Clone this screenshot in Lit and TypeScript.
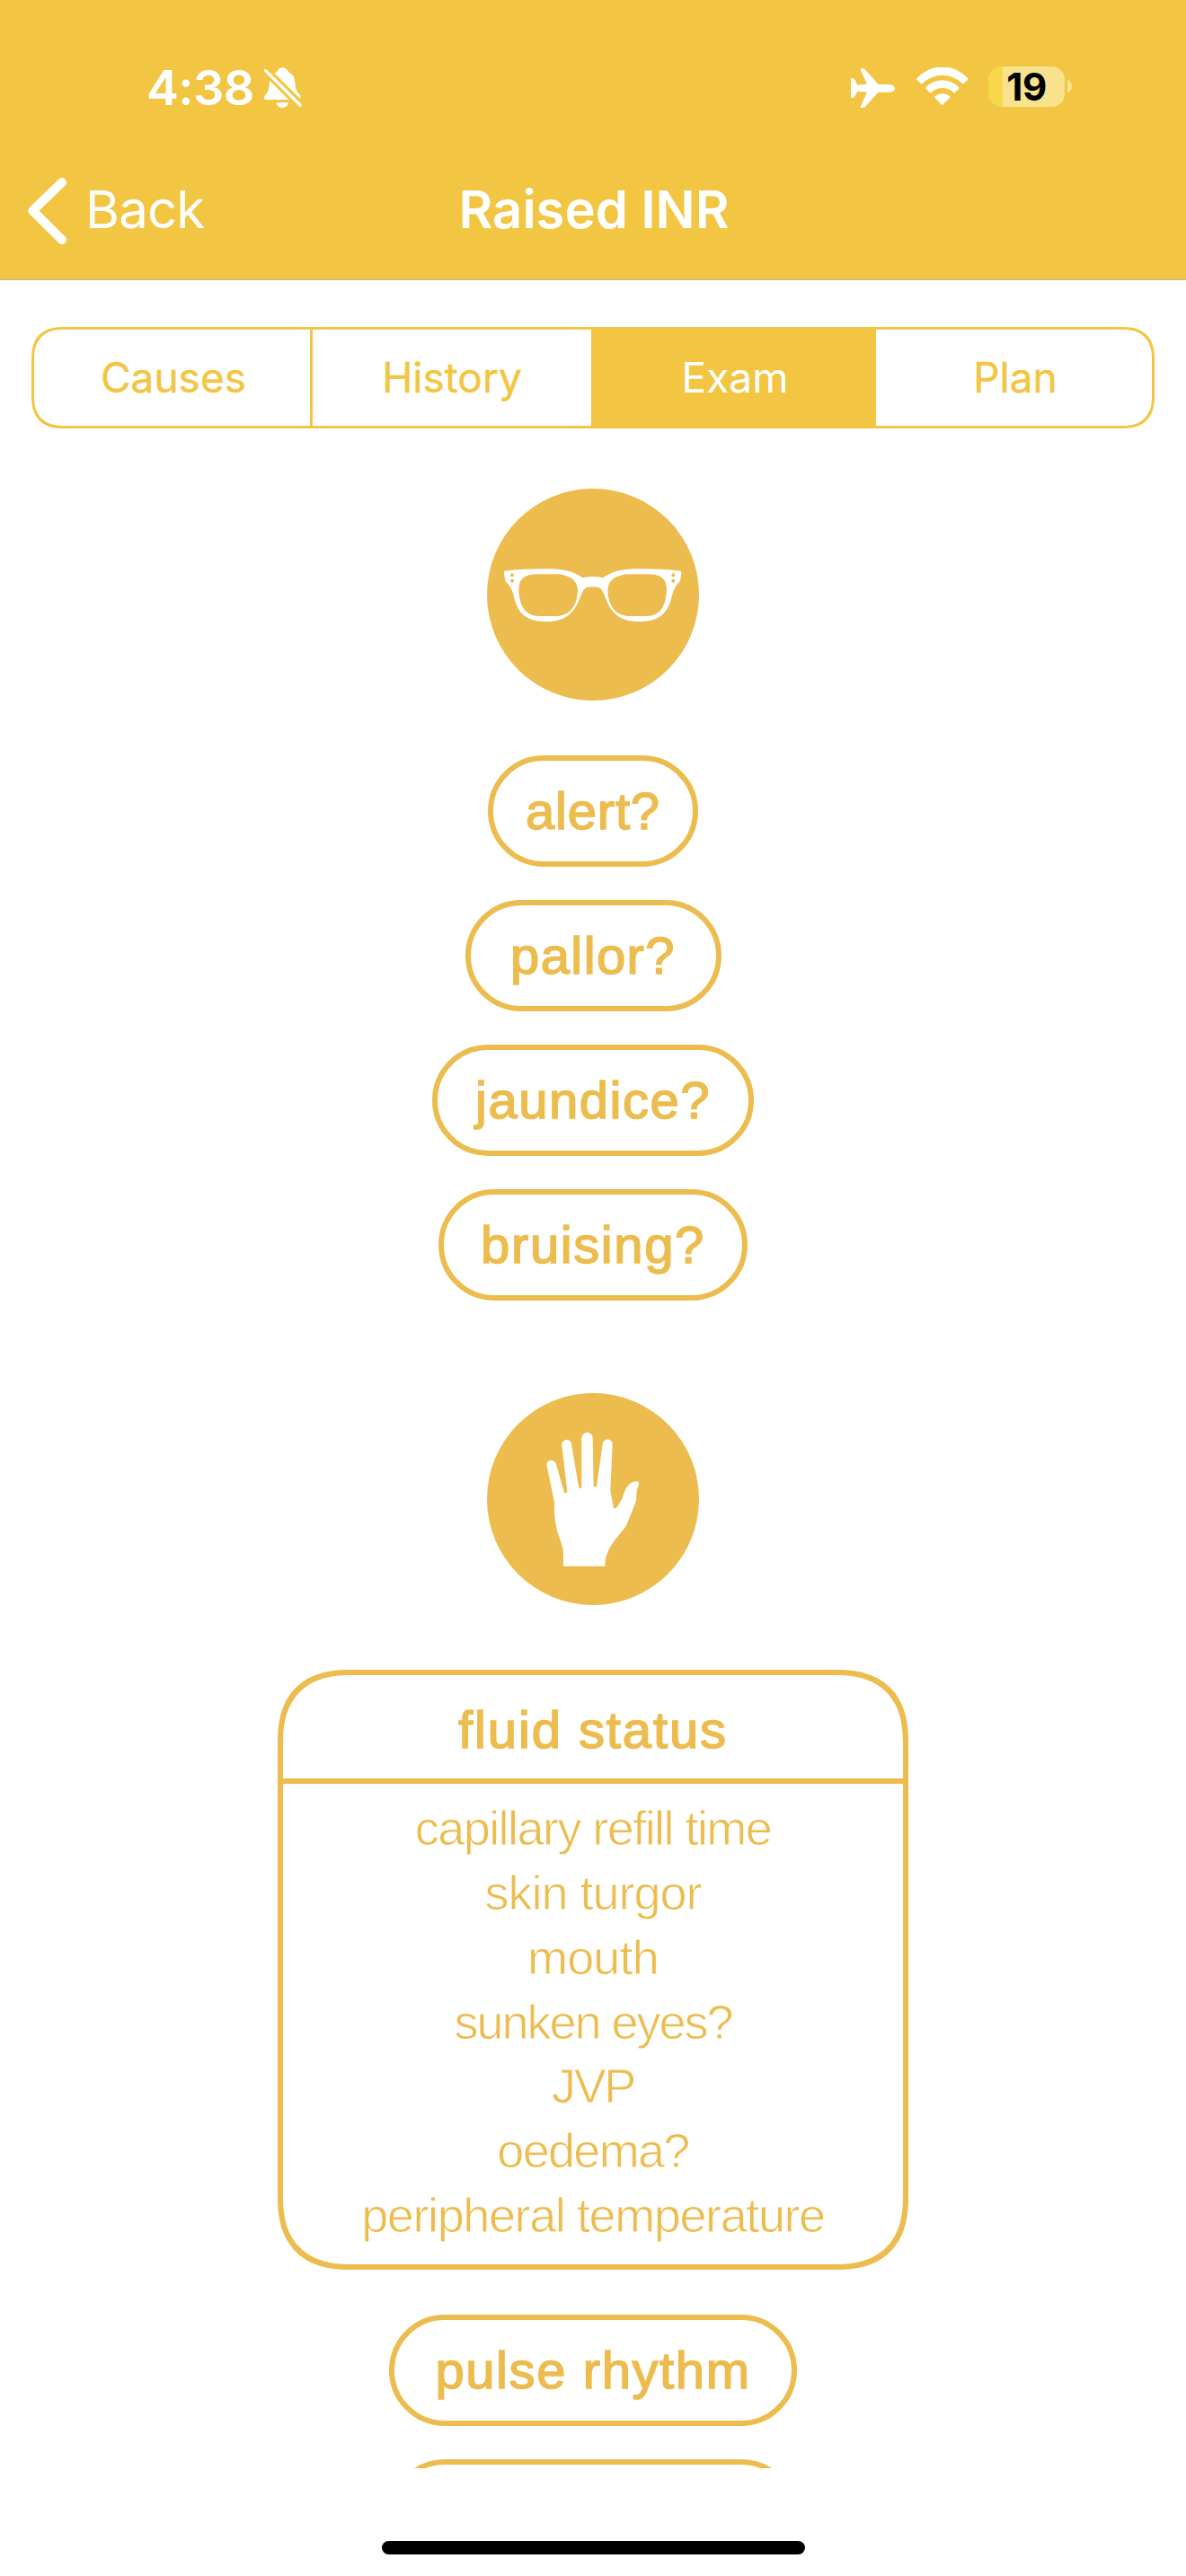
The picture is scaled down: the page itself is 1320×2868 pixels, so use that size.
import { LitElement, html, css, svg } from "lit";
import { customElement, property } from "lit/decorators.js";
import { classMap } from "lit/directives/class-map.js";
import { styleMap } from "lit/directives/style-map.js";

interface Label {
  text: string;
  spacing: number;
  width?: number;
}

const TABS = ["Causes", "History", "Exam", "Plan"];

const LOOK: Label[] = [
  { text: "alert?", spacing: 0.8, width: 234 },
  { text: "pallor?", spacing: 1.4, width: 285 },
  { text: "jaundice?", spacing: 1.5, width: 358 },
  { text: "bruising?", spacing: 1.6, width: 344 },
];

const FLUID: Label[] = [
  { text: "capillary refill time", spacing: -1.55 },
  { text: "skin turgor", spacing: -1 },
  { text: "mouth", spacing: -0.8 },
  { text: "sunken eyes?", spacing: -2 },
  { text: "JVP", spacing: -2.4 },
  { text: "oedema?", spacing: -1.7 },
  { text: "peripheral temperature", spacing: -1.4 },
];

const FEEL: Label[] = [
  { text: "pulse rhythm", spacing: 1.6, width: 454 },
  { text: "", spacing: 0, width: 454 },
];

const LENS =
  "M142 378C142 345 160 328 205 328H262C315 328 339 352 339 383C336 440 308 468 262 468H212C160 468 144 430 142 378Z";

const glasses = svg`
  <path fill="#fff" d="M95 317Q160 310 235 310Q315 308 355 340Q389 332 424 340Q464 308 543 310Q618 310 683 317Q686 318 685 322Q684 340 680 353Q664 364 655 395C643 450 620 486 543 486C478 486 450 455 433 410Q420 376 411 373Q389 366 367 373Q358 376 345 410C328 455 300 486 235 486C158 486 136 450 124 395Q115 364 98 353Q94 335 93 320Q93 318 95 317Z"/>
  <path fill="#ecbc4e" d=${LENS}/>
  <path fill="#ecbc4e" transform="matrix(-1 0 0 1 778 0)" d=${LENS}/>
  <g fill="#ecbc4e"><circle cx="120" cy="331" r="6"/><circle cx="120" cy="350" r="6"/><circle cx="658" cy="331" r="6"/><circle cx="658" cy="350" r="6"/></g>`;

const hand = svg`
  <path fill="#fff" d="M291 610V575C291 550 288 545 281 523C267 487 260 455 261 396L236 275C233 252 261 250 267 270L294 365Q299 368 304 362L286 206A16 16 0 0 1 318 202L343 349H352V182A18.500 18.500 0 0 1 389 182L392 345H402L422 202A16.500 16.500 0 0 1 455 204L448 358L459 417Q466 418 471 412L489 382C495 360 506 326 538 327Q548 330 540 346C532 360 538 385 531 400L503 470C490 500 430 540 430 610Z"/>`;

@customElement("icon-disc")
export class IconDisc extends LitElement {
  @property() name = "";
  static styles = css`
    :host { display: block; width: 236px; height: 236px; border-radius: 50%; background: #ecbc4e; }
    .art { display: block; width: 236px; height: 236px; }
  `;
  render() {
    return this.name === "hand"
      ? html`<svg class="art" viewBox="36 32 708 708">${hand}</svg>`
      : html`<svg class="art" viewBox="36 42 708 708">${glasses}</svg>`;
  }
}

@customElement("status-bar")
export class StatusBar extends LitElement {
  static styles = css`
    :host {
      display: flex; align-items: flex-start; height: 176px; box-sizing: border-box;
      padding: 65px 127px 0 163px; color: #fff; font-family: Inter, "Liberation Sans", sans-serif;
    }
    .time { font-size: 54px; font-weight: 600; line-height: 66px; letter-spacing: -0.6px; width: 131px; white-space: nowrap; }
    .bell { width: 42px; height: 45px; margin-top: 10px; }
    .fill { flex: 1; }
    .plane { width: 49px; height: 44px; margin-top: 11px; }
    .wifi { width: 58px; height: 42px; margin: 10px 22px 0 24px; }
    .cell {
      display: flex; align-items: center; justify-content: center; width: 85px; height: 45px;
      margin-top: 9px; border-radius: 14.500px; color: #000; font-size: 42px; font-weight: 700;
      line-height: 45px; letter-spacing: -0.500px;
      background: linear-gradient(90deg, #f7d84a 16px, #f8e28d 16px);
    }
    .nub { width: 5px; height: 14px; margin: 24px 0 0 3px; border-radius: 0 5px 5px 0 / 0 7px 7px 0; background: #f8e28d; }
  `;
  render() {
    return html`
      <span class="time">4:38</span>
      <svg class="bell" viewBox="882 106 126 135" fill="#fff">
        <path d="M917 126Q923 121 927 119Q931 107 943 107Q955 107 964 122Q985 131 986 164Q986 180 993 189Q1005 199 1004 206Q1003 211 1000 209Z"/>
        <path d="M901 150L964 214H889Q882 214 882 206Q882 201 890 193Q897 186 898 172Z"/>
        <path d="M922 224H963Q959 241 943 241Q926 241 922 224Z"/>
        <path d="M887 117L1002 232" stroke="#fff" stroke-width="10" stroke-linecap="round"/>
      </svg>
      <span class="fill"></span>
      <svg class="plane" viewBox="141 108 147 132" fill="#fff">
        <path d="M141 142h7q3 0 5 3L163 164L195 161L173 113q-1-4 3-4h6q3 0 6 3L233 162H268q20 2 20 13q0 12-20 13L233 188L188 237q-3 3-6 3h-7q-4 0-2-4L195 188L163 185L153 203q-2 4-5 4h-7z"/>
      </svg>
      <svg class="wifi" viewBox="359 105 174 126" fill="#fff">
        <path d="M361 141A113 113 0 0 1 530 141Q533 144 530 147L518 158Q515 161 512 158A97 97 0 0 0 379 158Q376 161 373 158L361 147Q358 144 361 141Z"/>
        <path d="M391 171A76 76 0 0 1 500 171Q503 174 500 177L488 188Q485 191 482 188A55 55 0 0 0 409 188Q406 191 403 188L391 177Q388 174 391 171Z"/>
        <path d="M421 202A36 36 0 0 1 470 202Q473 204 470 207L448 229Q445 232 442 229L421 207Q418 204 421 202Z"/>
      </svg>
      <span class="cell">19</span><span class="nub"></span>
    `;
  }
}

@customElement("finding-pill")
export class FindingPill extends LitElement {
  @property({ attribute: false }) label!: Label;
  static styles = css`
    :host { display: block; }
    .pill {
      display: flex; align-items: center; justify-content: center; box-sizing: border-box; height: 124px;
      padding-bottom: 1px; border: 6px solid #ecbc4e; border-radius: 62px; color: #ecbc4e;
      font: 400 58px/70px "Liberation Sans", Arial, sans-serif; white-space: nowrap;
      -webkit-text-stroke: 1.600px #ecbc4e;
    }
  `;
  render() {
    return html`<div class="pill" style=${styleMap({ width: `${this.label.width}px`, letterSpacing: `${this.label.spacing}px` })}>${this.label.text}</div>`;
  }
}

@customElement("app-root")
export class AppRoot extends LitElement {
  static styles = css`
    :host {
      display: flex; flex-direction: column; width: 1320px; height: 2868px; overflow: hidden; background: #fff;
      font-family: Inter, "Liberation Sans", sans-serif;
    }
    .header { display: flex; flex-direction: column; flex: none; height: 311px; background: #f2c643; border-bottom: 1px solid #b9b59f; }
    .nav { display: grid; grid-template-columns: 1fr 340px 1fr; align-items: center; height: 114px; padding: 0 31px; color: #fff; font-size: 58px; line-height: 70px; white-space: nowrap; }
    .back { display: flex; align-items: center; gap: 21px; letter-spacing: -0.800px; }
    .chevron { width: 43px; height: 74px; margin-top: 3px; }
    .title { padding-left: 2px; text-align: center; font-weight: 600; }
    .tabs {
      display: grid; grid-template-columns: 307px 313px 317px 1fr; flex: none; box-sizing: border-box; height: 113px;
      margin: 52px 35px 0; border: 3px solid #f2c643; border-radius: 30px; overflow: hidden;
      color: #f2c643; font-size: 46px; line-height: 56px; -webkit-text-stroke: 0.400px #f2c643;
    }
    .tab { display: flex; align-items: center; justify-content: center; padding: 0 0 1px 3px; }
    .ruled { border-left: 3px solid #f2c643; padding-left: 0; }
    .active { background: #f2c643; color: #fff; -webkit-text-stroke: 0; }
    .scroll { display: flex; flex-direction: column; align-items: center; flex: none; box-sizing: border-box; height: 2271px; padding-top: 67px; overflow: hidden; }
    .stack { display: flex; flex-direction: column; align-items: center; gap: 37px; margin: 61px 0 103px; }
    .card {
      flex: none; box-sizing: border-box; width: 702px; height: 668px; margin: 72px 0 50px;
      border: 6px solid #ecbc4e; border-radius: 68px; color: #ecbc4e; text-align: center;
      font-family: "Liberation Sans", Arial, sans-serif; white-space: nowrap;
    }
    @supports (corner-shape: superellipse(1.3)) {
      .card { border-radius: 82px; corner-shape: superellipse(1.3); }
      .tabs { border-radius: 36px; corner-shape: superellipse(1.3); }
    }
    .heading { height: 115px; box-sizing: border-box; padding-top: 6px; font-size: 58px; line-height: 110px; letter-spacing: 1.900px; -webkit-text-stroke: 1.600px #ecbc4e; }
    .items { border-top: 6px solid #ecbc4e; padding-top: 14px; font-size: 54px; line-height: 71.850px; -webkit-text-stroke: 0.800px #fff; }
    .more { display: flex; flex-direction: column; gap: 37px; }
    .home { align-self: center; width: 471px; height: 15px; margin-top: 81px; border-radius: 7.500px; background: #000; }
  `;
  render() {
    return html`
      <div class="header">
        <status-bar></status-bar>
        <div class="nav">
          <div class="back">
            <svg class="chevron" viewBox="93 471 129 222" fill="none"><path d="M207 486L109 581L207 678" stroke="#fff" stroke-width="30" stroke-linecap="round" stroke-linejoin="round"/></svg>
            <span>Back</span>
          </div>
          <div class="title">Raised INR</div>
        </div>
      </div>
      <div class="tabs">
        ${TABS.map(
          (tab, i) => html`<div class=${classMap({ tab: true, ruled: i === 1, active: i === 2 })}>${tab}</div>`,
        )}
      </div>
      <div class="scroll">
        <icon-disc name="glasses"></icon-disc>
        <div class="stack">${LOOK.map((label) => html`<finding-pill .label=${label}></finding-pill>`)}</div>
        <icon-disc name="hand"></icon-disc>
        <div class="card">
          <div class="heading">fluid status</div>
          <div class="items">
            ${FLUID.map((item) => html`<div style=${styleMap({ letterSpacing: `${item.spacing}px` })}>${item.text}</div>`)}
          </div>
        </div>
        <div class="more">${FEEL.map((label) => html`<finding-pill .label=${label}></finding-pill>`)}</div>
      </div>
      <div class="home"></div>
    `;
  }
}
